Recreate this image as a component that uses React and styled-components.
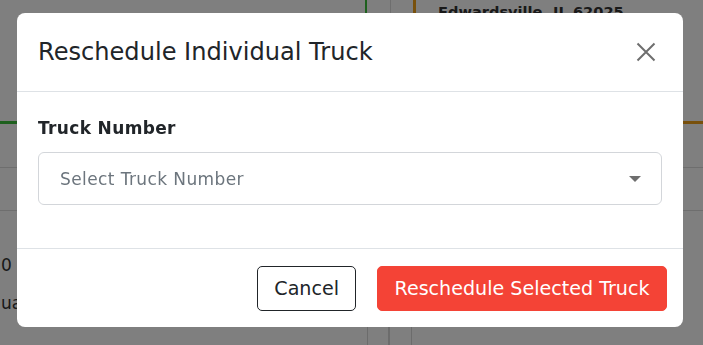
import React from "react";
import styled, { createGlobalStyle } from "styled-components";

const GlobalStyle = createGlobalStyle`
  html, body {
    margin: 0;
    padding: 0;
    overflow: hidden;
    background: #ffffff;
    font-family: "DejaVu Sans", "Liberation Sans", sans-serif;
  }
  * { box-sizing: border-box; }
`;

/* ---------- background page (dimmed behind the dialog) ---------- */
const Page = styled.div`
  width: 703px;
  height: 345px;
  display: flex;
  flex-direction: column;
  color: #333;
`;

const CardsRow = styled.div`
  display: flex;
  height: 124px;
`;

const Card = styled.div`
  height: 124px;
  border-bottom: 3px solid ${(p) => p.$accent};
  ${(p) => (p.$side === "right" ? `border-right: 2px solid ${p.$accent};` : "")}
  ${(p) => (p.$side === "left" ? `border-left: 3px solid ${p.$accent};` : "")}
  width: ${(p) => p.$width || "auto"};
  flex: ${(p) => (p.$width ? "none" : "1")};
  padding-left: 22px;
`;

const CardTitle = styled.div`
  font-weight: 700;
  font-size: 14.6px;
  line-height: 20px;
  padding-top: 2px;
`;

const Spacer = styled.div`
  width: 46px;
  display: flex;
  justify-content: center;
  &::after {
    content: "";
    width: 1px;
    background: #dcdcdc;
  }
`;

const TableRow = styled.div`
  height: ${(p) => p.$h}px;
  border-bottom: 1px solid #dcdcdc;
`;

const TableGrid = styled.div`
  flex: 1;
  display: grid;
  grid-template-columns: 368px 22px 22px 1fr;
`;

const Cell = styled.div`
  border-right: ${(p) => (p.$last ? "none" : `${p.$bw || 1}px solid #d8d8d8`)};
`;

const CellText = styled.div`
  display: flex;
  flex-direction: column;
  align-items: flex-start;
  padding: 44px 0 0 1px;
  gap: 18px;
  font-size: 17px;
  line-height: 20px;
  white-space: nowrap;
  color: #333;
`;

/* ---------- dialog ---------- */
const Overlay = styled.div`
  position: fixed;
  inset: 0;
  background: rgba(0, 0, 0, 0.5);
  padding: 13px 20px 0 17px;
`;

const Dialog = styled.div`
  width: 666px;
  background: #ffffff;
  border-radius: 8px;
  display: flex;
  flex-direction: column;
`;

const Header = styled.div`
  height: 79px;
  border-bottom: 1px solid #dee2e6;
  display: flex;
  align-items: center;
  justify-content: space-between;
  padding: 0 27px 0 21px;
`;

const Title = styled.h5`
  margin: 0;
  font-size: 24.1px;
  line-height: 29px;
  font-weight: 500;
  color: #212529;
`;

const CloseButton = styled.button`
  width: 20px;
  height: 20px;
  padding: 0;
  border: none;
  background: none;
  display: flex;
  cursor: pointer;
`;

const Body = styled.div`
  padding: 23px 21px 43px 21px;
  border-bottom: 1px solid #dee2e6;
  display: flex;
  flex-direction: column;
`;

const Label = styled.label`
  font-size: 17px;
  line-height: 26px;
  font-weight: 700;
  letter-spacing: 0.35px;
  color: #212529;
  margin-bottom: 11px;
`;

const Select = styled.div`
  height: 53px;
  border: 1px solid #d3d6da;
  border-radius: 6px;
  display: flex;
  align-items: center;
  justify-content: space-between;
  padding: 0 20px 0 21px;
`;

const Placeholder = styled.span`
  font-size: 17px;
  letter-spacing: 0.4px;
  color: #6c757d;
`;

const Footer = styled.div`
  height: 78px;
  display: flex;
  align-items: center;
  justify-content: flex-end;
  gap: 21px;
  padding-right: 16px;
`;

const Button = styled.button`
  height: 45px;
  padding: 0 ${(p) => (p.$primary ? 16.5 : 16)}px;
  border-radius: 5px;
  font-family: "DejaVu Sans", "Liberation Sans", sans-serif;
  font-size: 19.1px;
  font-weight: 500;
  cursor: pointer;
  border: 1px solid ${(p) => (p.$primary ? "#f44336" : "#212529")};
  background: ${(p) => (p.$primary ? "#f44336" : "#ffffff")};
  color: ${(p) => (p.$primary ? "#ffffff" : "#212529")};
`;

export default function App() {
  return (
    <>
      <GlobalStyle />
      <Page>
        <CardsRow>
          <Card $accent="#3cc03c" $side="right" $width="367px" />
          <Spacer />
          <Card $accent="#f0a018" $side="left">
            <CardTitle>Edwardsville, IL 62025</CardTitle>
          </Card>
        </CardsRow>
        <TableRow $h={44} />
        <TableRow $h={43} />
        <TableGrid>
          <Cell>
            <CellText>
              <span>0</span>
              <span>ua</span>
            </CellText>
          </Cell>
          <Cell $bw={2} />
          <Cell />
          <Cell $last />
        </TableGrid>
      </Page>
      <Overlay>
        <Dialog role="dialog">
          <Header>
            <Title>Reschedule Individual Truck</Title>
            <CloseButton aria-label="Close">
              <svg width="20" height="20" viewBox="0 0 20 20">
                <path d="M1.5 1.5 L18.5 18.5 M18.5 1.5 L1.5 18.5" stroke="#6e6e6e" strokeWidth="2" />
              </svg>
            </CloseButton>
          </Header>
          <Body>
            <Label>Truck Number</Label>
            <Select>
              <Placeholder>Select Truck Number</Placeholder>
              <svg width="12" height="6" viewBox="0 0 12 6">
                <path d="M0 0 H12 L6 6 Z" fill="#6e6e6e" />
              </svg>
            </Select>
          </Body>
          <Footer>
            <Button>Cancel</Button>
            <Button $primary>Reschedule Selected Truck</Button>
          </Footer>
        </Dialog>
      </Overlay>
    </>
  );
}
